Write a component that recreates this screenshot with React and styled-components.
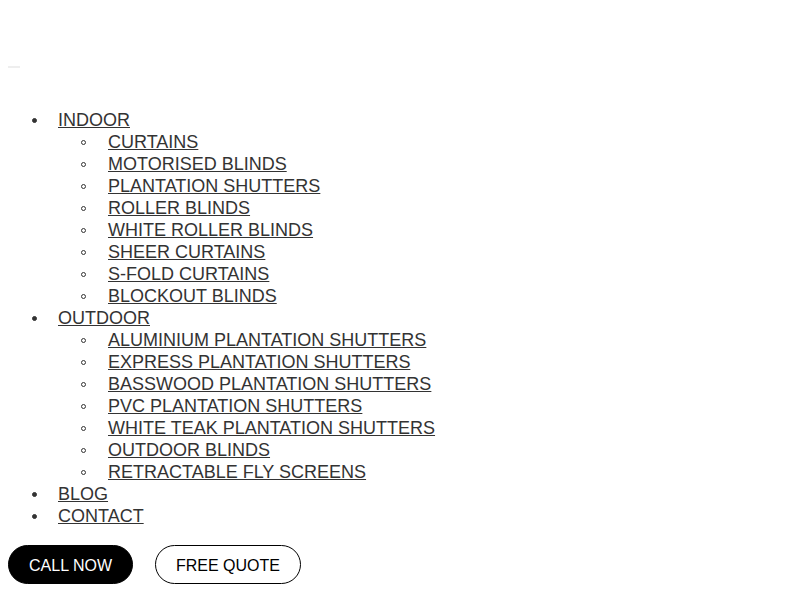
import React from 'react';
import styled, {createGlobalStyle} from 'styled-components';

const GlobalStyle = createGlobalStyle`
  body {
    margin: 8px;
    background: #fff;
    font-family: 'Liberation Sans', Arial, sans-serif;
    color: #333;
  }
`;

const Header = styled.header`
  padding-top: 58px;
`;

const Toggle = styled.div`
  width: 12px;
  height: 2px;
  background-color: #eee;
`;

const Menu = styled.ul`
  margin: ${(p) => (p.$sub ? '0' : '41px 0 18px')};
  padding-left: 50px;
  list-style: none;
  font-size: 18px;
  line-height: 22px;
`;

// bullet drawn by hand so it sits further from the text than the default marker
const Item = styled.li`
  position: relative;
  &::before {
    content: '';
    position: absolute;
    top: 9px;
    left: ${(p) => (p.$sub ? '-27px' : '-26px')};
    width: 5px;
    height: 5px;
    box-sizing: border-box;
    border-radius: 50%;
    border: 1px solid #333;
    background-color: ${(p) => (p.$sub ? 'transparent' : '#333')};
  }
`;

const MenuLink = styled.a`
  color: #333;
  text-decoration: underline;
`;

const Actions = styled.div`
  display: flex;
  gap: 22px;
`;

const Button = styled.a`
  display: inline-flex;
  align-items: center;
  justify-content: center;
  height: 39px;
  box-sizing: border-box;
  padding: 2px 20px 0;
  border-radius: 20px;
  font-size: 16px;
  text-decoration: none;
  border: 1px solid #000;
  background-color: ${(p) => (p.$dark ? '#000' : '#fff')};
  color: ${(p) => (p.$dark ? '#fff' : '#000')};
`;

const menu = [
  {
    title: 'INDOOR',
    items: [
      'CURTAINS',
      'MOTORISED BLINDS',
      'PLANTATION SHUTTERS',
      'ROLLER BLINDS',
      'WHITE ROLLER BLINDS',
      'SHEER CURTAINS',
      'S-FOLD CURTAINS',
      'BLOCKOUT BLINDS',
    ],
  },
  {
    title: 'OUTDOOR',
    items: [
      'ALUMINIUM PLANTATION SHUTTERS',
      'EXPRESS PLANTATION SHUTTERS',
      'BASSWOOD PLANTATION SHUTTERS',
      'PVC PLANTATION SHUTTERS',
      'WHITE TEAK PLANTATION SHUTTERS',
      'OUTDOOR BLINDS',
      'RETRACTABLE FLY SCREENS',
    ],
  },
  {title: 'BLOG'},
  {title: 'CONTACT'},
];

const App = () => (
  <>
    <GlobalStyle />
    <Header>
      <Toggle />
      <nav>
        <Menu>
          {menu.map((entry) => (
            <Item key={entry.title}>
              <MenuLink href="#">{entry.title}</MenuLink>
              {entry.items && (
                <Menu $sub>
                  {entry.items.map((item) => (
                    <Item $sub key={item}>
                      <MenuLink href="#">{item}</MenuLink>
                    </Item>
                  ))}
                </Menu>
              )}
            </Item>
          ))}
        </Menu>
      </nav>
      <Actions>
        <Button $dark href="#">
          CALL NOW
        </Button>
        <Button href="#">FREE QUOTE</Button>
      </Actions>
    </Header>
  </>
);

export default App;
